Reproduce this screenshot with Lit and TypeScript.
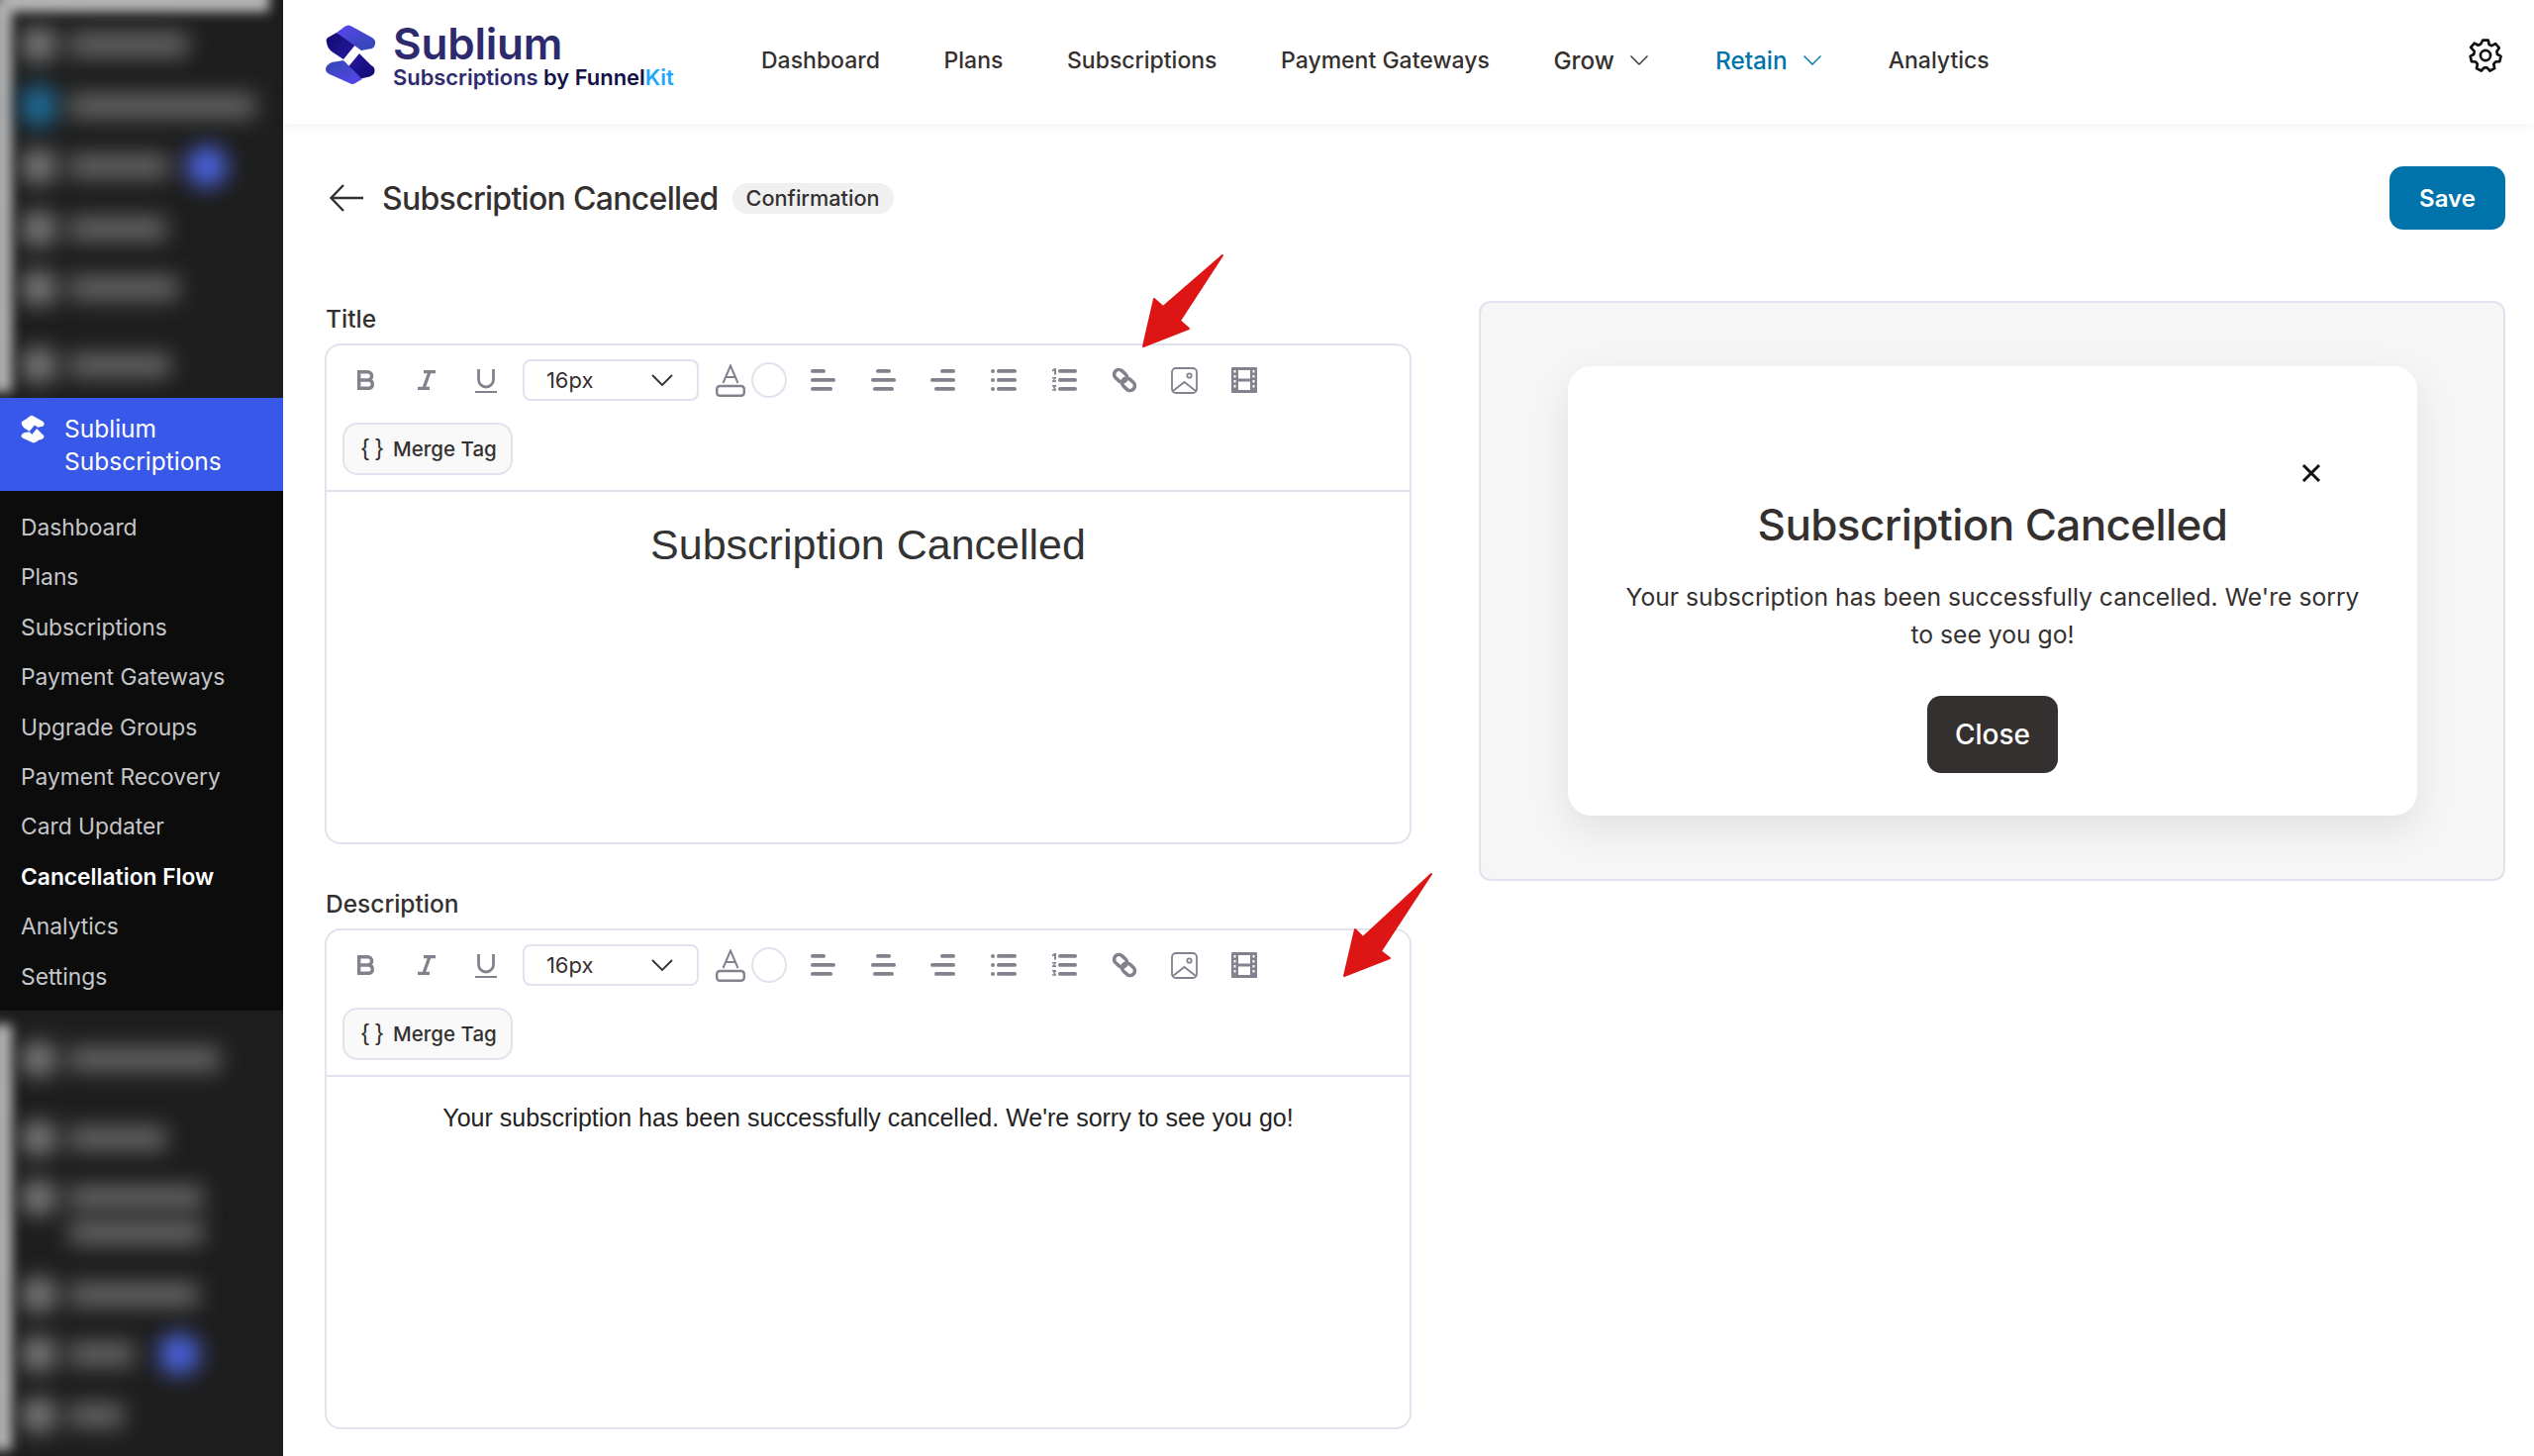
import { LitElement, html, css, svg } from "lit";
import { customElement } from "lit/decorators.js";

const logoMark = (p: string, a: string, b: string, c: string, d: string) => svg`
  <defs>
    <linearGradient id="${p}1" x1="0" y1="0" x2="1" y2="1"><stop offset="0" stop-color="${a}"/><stop offset="1" stop-color="${b}"/></linearGradient>
    <linearGradient id="${p}2" x1="0" y1="0" x2="1" y2="1"><stop offset="0" stop-color="${c}"/><stop offset="1" stop-color="${d}"/></linearGradient>
    <linearGradient id="${p}3" x1="1" y1="1" x2="0" y2="0"><stop offset="0" stop-color="${a}"/><stop offset="1" stop-color="${b}"/></linearGradient>
    <linearGradient id="${p}4" x1="1" y1="1" x2="0" y2="0"><stop offset="0" stop-color="${c}"/><stop offset="1" stop-color="${d}"/></linearGradient>
  </defs>
  <path fill="url(#${p}2)" d="M20 43 C19 40 20 38 23 37 L30 33 L50 44 L37 60 L25 52 Q21 49 20 43Z"/>
  <path fill="url(#${p}1)" d="M30 33 L38 27 Q42 24 46 27 L66 38 Q70 41 69 44 Q69 47 66 49 L55 51 Z"/>
  <path fill="url(#${p}4)" d="M68 74 C69 71 69 68 65 66 L53 54 L39 71 L52 80 L61 78 Q66 77 68 74Z" />
  <path fill="url(#${p}3)" d="M37 61 L25 63 Q19 66 19 70 Q19 73 23 75 L43 84 Q46 86 49 84 L56 80 Z"/>`;

const lines = (rows: [number, number][]) => rows.map(([x, w], i) => svg`<rect x="${x}" y="${i * 9}" width="${w}" height="3.800" rx="1.900" fill="currentColor"/>`);

const toolbarIcon = {
  bold: html`<svg width="18" height="20" viewBox="0 0 18 20" fill="none" stroke="currentColor" stroke-width="3.400"><path d="M1.700 1.700h8.800a4 4 0 0 1 0 8.300H1.700zM1.700 10h10a4.200 4.200 0 0 1 0 8.300h-10z"/></svg>`,
  italic: html`<svg width="18" height="20" viewBox="0 0 18 20" fill="none" stroke="currentColor" stroke-width="3.200"><path d="M6 1.600h12M0 18.400h12M12 1.600L6 18.400"/></svg>`,
  underline: html`<svg width="22" height="25" viewBox="0 0 22 25" fill="none" stroke="currentColor"><path stroke-width="2.800" d="M3.500 1v10.500a7.500 7.500 0 0 0 15 0V1"/><path stroke-width="2" d="M0 24h22"/></svg>`,
  color: html`<svg width="30" height="33" viewBox="0 0 30 33" fill="none" stroke="currentColor" style="flex:none"><path stroke-width="2" d="M7.500 19L15 1.500 22.500 19M10.500 13h9"/><rect x="1.200" y="22" width="27.600" height="9.800" rx="3" stroke-width="2.400"/></svg>`,
  left: html`<svg width="26" height="22" viewBox="0 0 26 22">${lines([[0, 15], [0, 25], [0, 22]])}</svg>`,
  center: html`<svg width="26" height="22" viewBox="0 0 26 22">${lines([[5, 15], [0, 25], [2, 21]])}</svg>`,
  right: html`<svg width="26" height="22" viewBox="0 0 26 22">${lines([[10, 15], [0, 25], [4, 21]])}</svg>`,
  list: html`<svg width="26" height="22" viewBox="0 0 26 22"><g fill="currentColor"><circle cx="2" cy="2" r="2"/><circle cx="2" cy="11" r="2"/><circle cx="2" cy="20" r="2"/><rect x="6" y="0" width="20" height="3.800" rx="1.900"/><rect x="6" y="9" width="20" height="3.800" rx="1.900"/><rect x="6" y="18" width="20" height="3.800" rx="1.900"/></g></svg>`,
  ordered: html`<svg width="26" height="24" viewBox="0 0 26 24"><g fill="currentColor"><path d="M1 1.500L3.500 0H5v6.500H3V2.500L1 3.500z"/><path d="M1 9h4v1.200l-2.200 2.100H5V14H1v-1.300L3.300 10.500H1z"/><path d="M1 17h4v1.500l-1.500 1.200L5 21v1.800H1v-1.500h2.500L2 20v-1.300l1.300-.3H1z"/><rect x="7" y="1" width="19" height="3.800" rx="1.900"/><rect x="7" y="10" width="19" height="3.800" rx="1.900"/><rect x="7" y="19" width="19" height="3.800" rx="1.900"/></g></svg>`,
  link: html`<svg width="26" height="26" viewBox="0 0 26 26" fill="none" stroke="currentColor" stroke-width="3.600"><rect x="2" y="4" width="14" height="9.500" rx="4.700" transform="rotate(42 9 8.750)"/><rect x="10" y="12.500" width="14" height="9.500" rx="4.700" transform="rotate(42 17 17.250)"/></svg>`,
  image: html`<svg width="27" height="27" viewBox="0 0 27 27" fill="none" stroke="currentColor" stroke-width="1.800"><rect x="1" y="1" width="25" height="25" rx="4"/><circle cx="18.500" cy="8.500" r="2.200"/><path d="M2 24 L13.500 15 L25 24"/></svg>`,
  film: html`<svg width="26" height="26" viewBox="0 0 26 26"><path fill="currentColor" fill-rule="evenodd" d="M1 0h24a1 1 0 0 1 1 1v24a1 1 0 0 1-1 1H1a1 1 0 0 1-1-1V1a1 1 0 0 1 1-1zM7 3v8.500h12V3zM7 14.500V23h12v-8.500zM2.500 3v2.500h2V3zM2.500 8v2.500h2V8zM2.500 13v2.500h2V13zM2.500 18v2.500h2V18zM21.500 3v2.500h2V3zM21.500 8v2.500h2V8zM21.500 13v2.500h2V13zM21.500 18v2.500h2V18z"/></svg>`,
};

type BlurRow = { mt: number; w: number; badge?: number; tone?: string };
const blurTop: BlurRow[] = [
  { mt: 27, w: 120 }, { mt: 26, w: 188, tone: "blue" }, { mt: 25, w: 100, badge: 18 }, { mt: 27, w: 98 }, { mt: 24, w: 110 }, { mt: 42, w: 102 },
];
const blurBottom: BlurRow[] = [
  { mt: 31, w: 152 }, { mt: 44, w: 98 }, { mt: 24, w: 135, tone: "none" }, { mt: -1, w: 135, tone: "ghost" }, { mt: 27, w: 130 }, { mt: 24, w: 65, badge: 25 }, { mt: 26, w: 55 },
];

@customElement("app-root")
export class AppRoot extends LitElement {
  static styles = css`
    :host { display: block; position: relative; width: 2560px; height: 1471px; overflow: hidden; background: #fff; font-family: Inter, "Liberation Sans", sans-serif; color: #353030; }
    * { box-sizing: border-box; }
    .app { display: flex; height: 1471px; }
    .side { width: 286px; flex: none; background: #1e1e1e; display: flex; flex-direction: column; overflow: hidden; }
    .blurred { position: relative; overflow: hidden; display: flex; flex-direction: column; flex: none; }
    .blurred.top { height: 402px; }
    .blurred.bottom { flex: 1; }
    .strip { position: absolute; left: -8px; width: 20px; filter: blur(6px); background: #b4b4b4; }
    .top .strip { top: 0; bottom: 6px; }
    .bottom .strip { top: 14px; bottom: 6px; }
    .cap { position: absolute; left: 0; right: 14px; top: -10px; height: 22px; filter: blur(6px); background: #b8b8b8; }
    .brow { display: flex; align-items: center; height: 36px; flex: none; padding-left: 22px; filter: blur(11px); }
    .blob { width: 34px; height: 34px; border-radius: 10px; background: #7a7a7a; flex: none; }
    .blob.blue { background: #1f6c98; height: 40px; }
    .blob.ghost { background: transparent; }
    .bar { margin-left: 14px; height: 24px; background: #666; flex: none; }
    .badge { width: 42px; height: 42px; border-radius: 50%; background: #4a62dc; flex: none; }
    .active { background: #3858e9; height: 94px; flex: none; display: flex; padding: 15px 0 0 20px; gap: 19px; color: #fff; font-size: 24.500px; line-height: 33px; }
    .active svg { width: 26px; height: 30px; margin-top: 2px; flex: none; }
    .submenu { background: #0c0c0c; height: 525px; flex: none; padding: 12px 0 0 21px; display: flex; flex-direction: column; }
    .submenu a { height: 50.400px; line-height: 50px; font-size: 22.800px; color: #c5c6c8; }
    .submenu a.on { color: #fff; font-weight: 600; }
    .main { flex: 1; min-width: 0; display: flex; flex-direction: column; }
    header { height: 125px; flex: none; display: flex; align-items: center; padding: 0 30px 0 42px; background: #fff; box-shadow: 0 2px 12px rgba(0,0,0,.06); position: relative; }
    .logo { display: flex; gap: 15px; align-items: center; width: 441px; flex: none; margin-top: -13px; }
    .logo svg { width: 56px; height: 64px; flex: none; margin-left: -2px; }
    .brand { display: flex; flex-direction: column; }
    .brand b { font-size: 44px; line-height: 44px; font-weight: 600; color: #2d2a6e; letter-spacing: -.2px; }
    .brand span { font-size: 21.900px; line-height: 24px; font-weight: 600; color: #2d2a6e; white-space: nowrap; }
    .brand span i { font-style: normal; color: #111048; }
    .brand span em { font-style: normal; color: #1ea7fd; }
    nav { display: flex; gap: 64.600px; font-size: 23px; font-weight: 500; flex: 1; margin-top: -3px; }
    nav a { display: flex; align-items: center; gap: 15px; white-space: nowrap; }
    nav a.menu { font-size: 24.300px; padding-right: 2.500px; }
    nav a.cur { color: #0073aa; }
    nav svg { width: 20px; height: 12px; }
    .gear { width: 38px; height: 38px; margin-top: -14px; stroke-width: 1.700; }
    .content { flex: 1; display: flex; flex-direction: column; padding: 43px 29px 0 42px; }
    .titlebar { display: flex; align-items: center; height: 64px; flex: none; }
    .titlebar .back { width: 36px; height: 30px; margin-left: 4px; flex: none; }
    .titlebar h1 { font-size: 32px; letter-spacing: -.7px; font-weight: 500; margin: 0 0 0 18px; white-space: nowrap; }
    .pill { margin-left: 14px; background: #f0f0f1; border-radius: 16px; font-size: 21.700px; font-weight: 500; height: 31px; line-height: 31px; padding: 0 14px; }
    .save { margin-left: auto; width: 117px; height: 64px; background: #0073aa; color: #fff; font: 600 24px Inter, sans-serif; border: 0; border-radius: 14px; }
    .cols { display: flex; gap: 68px; margin-top: 72px; align-items: flex-start; }
    .left { width: 1098px; flex: none; display: flex; flex-direction: column; margin-top: 2px; }
    .field label { display: block; font-size: 24.500px; font-weight: 500; line-height: 32px; height: 32px; margin-bottom: 9px; padding-left: 1px; }
    .field + .field { margin-top: 44px; }
    .editor { height: 506px; border: 2px solid #e2e1ee; border-radius: 16px; display: flex; flex-direction: column; }
    .tools { height: 148px; border-bottom: 2px solid #e2e1ee; flex: none; padding: 14px 0 0 9.500px; }
    .row { display: flex; align-items: center; height: 42px; color: #82828e; }
    .row .slot { flex: none; display: flex; align-items: center; justify-content: center; width: 60.800px; height: 42px; }
    .row .slot svg { display: block; }
    .select { width: 178px; height: 42px; margin: 0 17px 0 6px; flex: none; border: 2px solid #e2e1ee; border-radius: 8px; display: flex; align-items: center; justify-content: space-between; padding: 0 24px 0 22px; font-size: 22px; color: #353030; }
    .select svg { width: 22px; height: 13px; }
    .circle { width: 36px; height: 36px; margin-left: 6px; margin-right: 6.500px; border-radius: 50%; border: 2px solid #e2e1ee; flex: none; }
    .merge { margin: 22px 0 0 6.500px; width: 172px; height: 53px; border: 2px solid #e2e1ee; border-radius: 15px; background: #f9f9fa; display: flex; align-items: center; padding-left: 17px; font-size: 20.500px; font-weight: 500; gap: 4px; }
    .merge .br { font-family: "Liberation Sans", sans-serif; font-weight: 400; letter-spacing: 6px; font-size: 24px; margin-top: -3px; }
    .body { flex: 1; text-align: center; font-family: "Liberation Sans", Arial, sans-serif; }
    .body.h { font-size: 43px; line-height: 52px; padding-top: 27px; color: #333; }
    .body.p { font-size: 25px; line-height: 36px; padding-top: 23px; color: #222; }
    .preview { flex: 1; height: 586px; background: #f6f6f6; border: 2px solid #e2e1ee; border-radius: 12px; padding: 64px 87px 0 88px; }
    .modal { position: relative; height: 454px; background: #fff; border-radius: 24px; box-shadow: 0 14px 40px rgba(0,0,0,.09); text-align: center; padding-top: 132px; }
    .x { position: absolute; top: 97px; right: 96px; width: 22px; height: 22px; }
    .modal h2 { margin: 0; font-size: 44px; letter-spacing: -.6px; line-height: 56px; font-weight: 500; }
    .modal p { margin: 26px 0 0; font-size: 24.700px; line-height: 38px; padding: 0 50px; }
    .close { margin-top: 43px; width: 132px; height: 78px; background: #353030; color: #fff; font: 500 28px Inter, sans-serif; border: 0; border-radius: 14px; }
    .overlay { position: absolute; inset: 0; width: 2560px; height: 1471px; pointer-events: none; }
  `;

  private editor(label: string, bodyClass: string, text: string) {
    return html`<div class="field">
      <label>${label}</label>
      <div class="editor">
        <div class="tools">
          <div class="row">
            <span class="slot">${toolbarIcon.bold}</span>
            <span class="slot">${toolbarIcon.italic}</span>
            <span class="slot">${toolbarIcon.underline}</span>
            <div class="select"><span>16px</span><svg viewBox="0 0 22 13"><path d="M1 1l10 10L21 1" fill="none" stroke="#353030" stroke-width="1.800"/></svg></div>
            ${toolbarIcon.color}
            <span class="circle"></span>
            <span class="slot">${toolbarIcon.left}</span>
            <span class="slot">${toolbarIcon.center}</span>
            <span class="slot">${toolbarIcon.right}</span>
            <span class="slot">${toolbarIcon.list}</span>
            <span class="slot">${toolbarIcon.ordered}</span>
            <span class="slot">${toolbarIcon.link}</span>
            <span class="slot">${toolbarIcon.image}</span>
            <span class="slot">${toolbarIcon.film}</span>
          </div>
          <div class="merge"><span class="br">{}</span><span>Merge Tag</span></div>
        </div>
        <div class="body ${bodyClass}">${text}</div>
      </div>
    </div>`;
  }

  private blur(rows: BlurRow[]) {
    return rows.map((r) => html`<div class="brow" style="margin-top:${r.mt}px">
      <span class="blob ${r.tone === "blue" ? "blue" : r.tone === "ghost" ? "ghost" : ""}"></span><span class="bar" style="width:${r.w}px"></span>
      ${r.badge ? html`<span class="badge" style="margin-left:${r.badge}px"></span>` : ""}
    </div>`);
  }

  render() {
    const sub = ["Dashboard", "Plans", "Subscriptions", "Payment Gateways", "Upgrade Groups", "Payment Recovery", "Card Updater", "Cancellation Flow", "Analytics", "Settings"];
    const chevron = html`<svg viewBox="0 0 20 12"><path d="M1.500 1.500L10 10l8.500-8.500" fill="none" stroke="currentColor" stroke-width="1.400"/></svg>`;
    return html`<div class="app">
      <aside class="side">
        <div class="blurred top"><span class="cap"></span><span class="strip"></span>${this.blur(blurTop)}</div>
        <div class="active">
          <svg viewBox="16 24 56 64">${logoMark("w", "#fff", "#fff", "#fff", "#fff")}</svg>
          <span>Sublium<br />Subscriptions</span>
        </div>
        <div class="submenu">${sub.map((s) => html`<a class=${s === "Cancellation Flow" ? "on" : ""}>${s}</a>`)}</div>
        <div class="blurred bottom"><span class="strip"></span>${this.blur(blurBottom)}</div>
      </aside>
      <div class="main">
        <header>
          <div class="logo">
            <svg viewBox="16 24 56 64">${logoMark("c", "#5b45ee", "#2f48b0", "#0e0a6e", "#2a1aa5")}</svg>
            <div class="brand"><b>Sublium</b><span>Subscriptions <i>by Funnel</i><em>Kit</em></span></div>
          </div>
          <nav>
            <a>Dashboard</a><a>Plans</a><a>Subscriptions</a><a>Payment Gateways</a>
            <a class="menu">Grow ${chevron}</a><a class="menu cur">Retain ${chevron}</a><a>Analytics</a>
          </nav>
          <svg class="gear" viewBox="0 0 24 24" fill="none" stroke="#111" stroke-linejoin="round"><path d="M10.300 2.300h3.400l.6 2.700 1.700.8 2.400-1.300 2.300 2.700-1.500 2.200.3 1.800 2.300 1.400-.8 3.300-2.700.2-1.100 1.500.6 2.700-3 1.500-1.800-2-1.900 0-1.800 2-3-1.500.6-2.700-1.100-1.500-2.700-.2-.8-3.300 2.300-1.400.3-1.800L2.600 6.900l2.300-2.700 2.400 1.300 1.700-.8z"/><circle cx="12" cy="12" r="3.200"/></svg>
        </header>
        <div class="content">
          <div class="titlebar">
            <svg class="back" viewBox="0 0 36 30" fill="none" stroke="#353030" stroke-width="2.400"><path d="M35 15H3M15 2L2.500 15 15 28"/></svg>
            <h1>Subscription Cancelled</h1>
            <span class="pill">Confirmation</span>
            <button class="save">Save</button>
          </div>
          <div class="cols">
            <div class="left">
              ${this.editor("Title", "h", "Subscription Cancelled")}
              ${this.editor("Description", "p", "Your subscription has been successfully cancelled. We're sorry to see you go!")}
            </div>
            <div class="preview">
              <div class="modal">
                <svg class="x" viewBox="0 0 22 22"><path d="M3 3l16 16M19 3L3 19" stroke="#111" stroke-width="3"/></svg>
                <h2>Subscription Cancelled</h2>
                <p>Your subscription has been successfully cancelled. We're sorry to see you go!</p>
                <button class="close">Close</button>
              </div>
            </div>
          </div>
        </div>
      </div>
    </div>
    <svg class="overlay" viewBox="0 0 2560 1471">
      <path fill="#dd1515" stroke="#dd1515" stroke-width="2" stroke-linejoin="round" d="M1155 350L1166 302L1175 310L1235 258L1192 324L1201 332Z"/>
      <path fill="#dd1515" stroke="#dd1515" stroke-width="2" stroke-linejoin="round" d="M1358 986L1369 939L1377 947L1446 883L1395 961L1404 968Z"/>
    </svg>`;
  }
}
